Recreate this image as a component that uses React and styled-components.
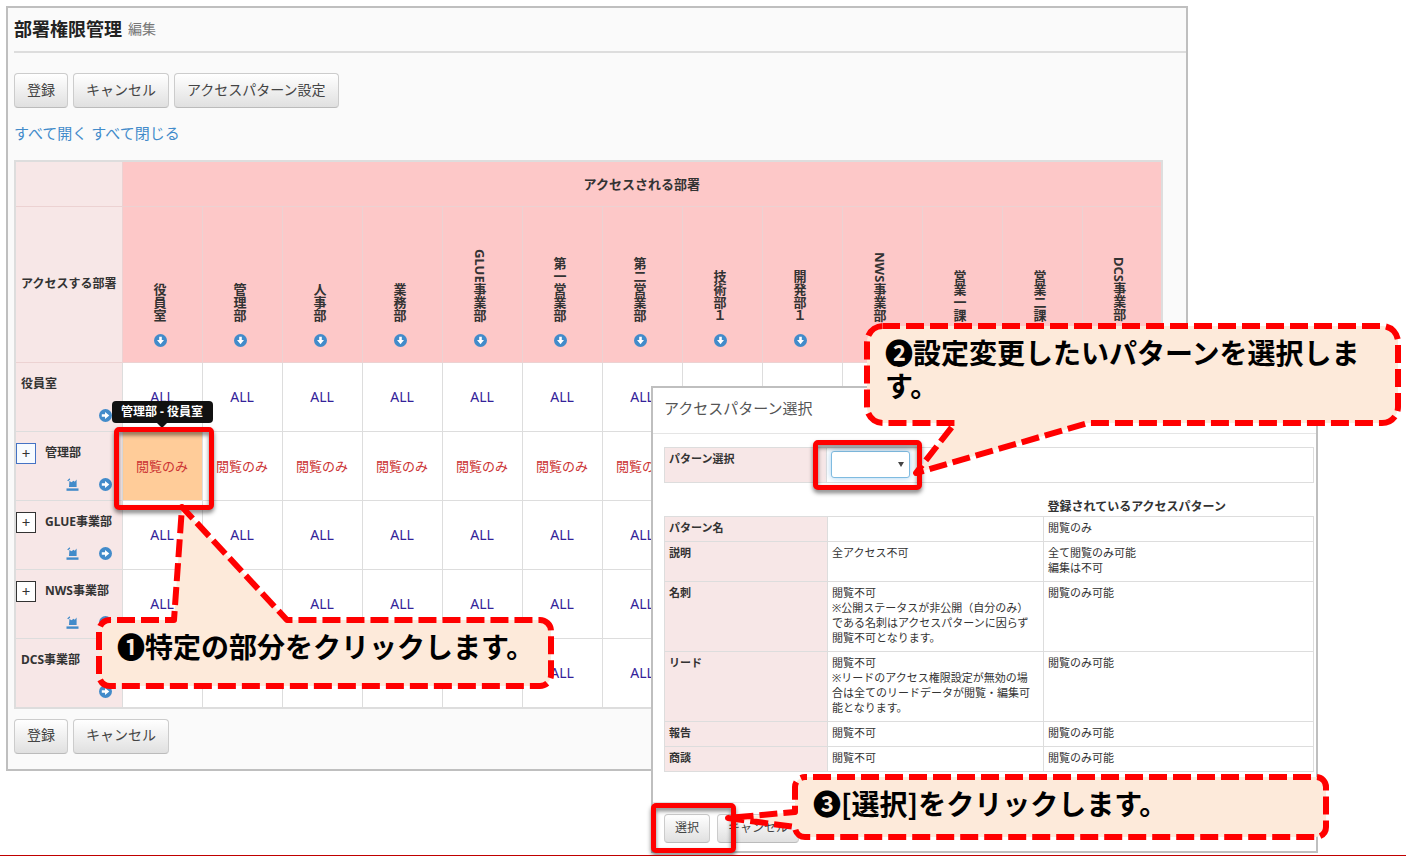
import React from 'react';
import styled, { createGlobalStyle } from 'styled-components';

const columns = [
  '役員室', '管理部', '人事部', '業務部', 'GLUE事業部', '第一営業部', '第二営業部',
  '技術部１', '開発部１', 'NWS事業部', '営業一課', '営業二課', 'DCS事業部',
];

const rows = [
  { name: '役員室', value: 'ALL' },
  { name: '管理部', value: '閲覧のみ', expandable: true, focused: true, readOnly: true },
  { name: 'GLUE事業部', value: 'ALL', expandable: true },
  { name: 'NWS事業部', value: 'ALL', expandable: true },
  { name: 'DCS事業部', value: 'ALL' },
];

const patterns = [
  { label: 'パターン名', current: [], registered: ['閲覧のみ'] },
  { label: '説明', current: ['全アクセス不可'], registered: ['全て閲覧のみ可能', '編集は不可'] },
  {
    label: '名刺',
    current: ['閲覧不可', '※公開ステータスが非公開（自分のみ）', 'である名刺はアクセスパターンに因らず', '閲覧不可となります。'],
    registered: ['閲覧のみ可能'],
  },
  {
    label: 'リード',
    current: ['閲覧不可', '※リードのアクセス権限設定が無効の場', '合は全てのリードデータが閲覧・編集可', '能となります。'],
    registered: ['閲覧のみ可能'],
  },
  { label: '報告', current: ['閲覧不可'], registered: ['閲覧のみ可能'] },
  { label: '商談', current: ['閲覧不可'], registered: ['閲覧のみ可能'] },
];

const CircleArrow = ({ down }) => (
  <svg width="13" height="13" viewBox="0 0 13 13" aria-hidden="true">
    <circle cx="6.5" cy="6.5" r="6.5" fill="#428bca" />
    <path
      d="M2.8 5.2H6V3L10.3 6.5L6 10V7.8H2.8Z"
      fill="#fff"
      transform={down ? 'rotate(90 6.5 6.5)' : undefined}
    />
  </svg>
);

const SaveArrow = () => (
  <svg width="13" height="13" viewBox="0 0 13 13" aria-hidden="true">
    <path d="M0.5 10.4H12.5V12.8H0.5Z" fill="#428bca" />
    <path d="M3 9L3.4 3L5.6 4.2L7.4 2.8L8.8 3.8L10.6 1.4V9ZM1.2 2.4L3.6 0.2L4.2 1.4L2.2 3.2Z" fill="#428bca" />
  </svg>
);

const Lines = ({ items }) =>
  items.map((item) => <Line key={item}>{item}</Line>);

const Callout = ({ left, top, width, height, path, offset, children }) => (
  <CalloutBox $left={left} $top={top} $width={width} $height={height}>
    <CalloutShape aria-hidden="true">
      <path
        d={path}
        fill="#fdeada"
        stroke="#f00"
        strokeWidth="6"
        strokeLinejoin="round"
        strokeDasharray="18 6"
        strokeDashoffset={offset}
      />
    </CalloutShape>
    <CalloutText>{children}</CalloutText>
  </CalloutBox>
);

const PermissionTable = () => (
  <Matrix>
    <colgroup>
      <LabelCol />
      {columns.map((name) => <col key={name} />)}
    </colgroup>
    <thead>
      <tr>
        <CornerCell />
        <GroupHead colSpan={columns.length}>アクセスされる部署</GroupHead>
      </tr>
      <tr>
        <SideHead>アクセスする部署</SideHead>
        {columns.map((name) => (
          <ColumnHead key={name} scope="col">
            <ColumnInner>
              <VerticalName>{name}</VerticalName>
              <CircleArrow down />
            </ColumnInner>
          </ColumnHead>
        ))}
      </tr>
    </thead>
    <tbody>
      {rows.map((row) => (
        <tr key={row.name}>
          <RowHead scope="row">
            <RowInner>
              <RowName>
                {row.expandable && (
                  <Expander type="button" $focused={row.focused} aria-label={`${row.name}を開く`}>+</Expander>
                )}
                <span>{row.name}</span>
              </RowName>
              <RowIcons>
                {row.expandable && <SaveArrow />}
                <CircleArrow />
              </RowIcons>
            </RowInner>
          </RowHead>
          {columns.map((name, i) => {
            const active = row.focused && i === 0;
            return (
              <ValueCell key={name} $readOnly={row.readOnly} $active={active}>
                {row.value}
                {active && (
                  <>
                    <Tooltip role="tooltip">管理部 - 役員室</Tooltip>
                    <CellHighlight />
                  </>
                )}
              </ValueCell>
            );
          })}
        </tr>
      ))}
    </tbody>
  </Matrix>
);

const PatternDialog = () => (
  <Dialog role="dialog" aria-labelledby="dialog-title">
    <DialogTitle id="dialog-title">アクセスパターン選択</DialogTitle>
    <DialogBody>
      <SelectRow>
        <SelectLabel htmlFor="pattern">パターン選択</SelectLabel>
        <SelectArea>
          <SelectWrap>
            <PatternSelect id="pattern" defaultValue="">
              <option value="" />
            </PatternSelect>
            <Caret aria-hidden="true" />
            <SelectHighlight />
          </SelectWrap>
        </SelectArea>
      </SelectRow>
      <PatternTable>
        <colgroup>
          <NameCol />
          <CurrentCol />
          <col />
        </colgroup>
        <thead>
          <tr>
            <PatternHead />
            <PatternHead />
            <PatternHead scope="col">登録されているアクセスパターン</PatternHead>
          </tr>
        </thead>
        <tbody>
          {patterns.map((item) => (
            <tr key={item.label}>
              <PatternLabel scope="row">{item.label}</PatternLabel>
              <PatternCell><Lines items={item.current} /></PatternCell>
              <PatternCell><Lines items={item.registered} /></PatternCell>
            </tr>
          ))}
        </tbody>
      </PatternTable>
    </DialogBody>
    <DialogFooter>
      <ChooseWrap>
        <SmallButton type="button">選択</SmallButton>
        <ChooseHighlight />
      </ChooseWrap>
      <SmallButton type="button">キャンセル</SmallButton>
    </DialogFooter>
  </Dialog>
);

const App = () => (
  <Page>
    <GlobalStyle />
    <Panel>
      <PageHeader>
        <PageTitle>部署権限管理</PageTitle>
        <PageMode>編集</PageMode>
      </PageHeader>
      <Toolbar>
        <Button type="button">登録</Button>
        <Button type="button">キャンセル</Button>
        <Button type="button">アクセスパターン設定</Button>
      </Toolbar>
      <LinkRow>
        <TextLink href="#open">すべて開く</TextLink>
        <TextLink href="#close">すべて閉じる</TextLink>
      </LinkRow>
      <PermissionTable />
      <BottomBar>
        <Button type="button">登録</Button>
        <Button type="button">キャンセル</Button>
      </BottomBar>
    </Panel>

    <PatternDialog />

    <Callout
      left={96} top={617} width={458} height={72} offset={17}
      path="M14 3H78L86 -110L191 3H444A11 11 0 0 1 455 14V58A11 11 0 0 1 444 69H14A11 11 0 0 1 3 58V14A11 11 0 0 1 14 3Z"
    >
      ❶特定の部分をクリックします。
    </Callout>
    <Callout
      left={864} top={323} width={537} height={103} offset={1}
      path="M19 3H518A16 16 0 0 1 534 19V84A16 16 0 0 1 518 100H224L52 150L91 100H19A16 16 0 0 1 3 84V19A16 16 0 0 1 19 3Z"
    >
      ❷設定変更したいパターンを選択します。
    </Callout>
    <Callout
      left={792} top={774} width={537} height={66} offset={16}
      path="M13 3H524A10 10 0 0 1 534 13V53A10 10 0 0 1 524 63H13A10 10 0 0 1 3 53L-64 44L3 38V13A10 10 0 0 1 13 3Z"
    >
      ❸[選択]をクリックします。
    </Callout>
  </Page>
);

export default App;


const GlobalStyle = createGlobalStyle`
  * {
    box-sizing: border-box;
  }

  body {
    margin: 0;
    background: #fff;
    color: #333;
    font-family: 'Noto Sans', 'Noto Sans CJK JP', sans-serif;
    font-size: 14px;
    line-height: 20px;
  }

  button, select {
    font-family: inherit;
  }
`;

const Page = styled.main`
  position: relative;
  min-height: 100vh;
  padding: 6px 218px 6px 6px;
  border-bottom: 1px solid #c00000;
  overflow: hidden;
`;

const Panel = styled.section`
  padding-left: 6px;
  padding-bottom: 15px;
  border: 2px solid #bfbfbf;
  background: #fafafa;
`;

const PageHeader = styled.header`
  display: flex;
  align-items: center;
  gap: 6px;
  height: 45px;
  padding-bottom: 2px;
  border-bottom: 2px solid #ddd;
`;

const PageTitle = styled.h1`
  margin: 0;
  font-size: 18px;
  font-weight: 700;
  color: #222;
`;

const PageMode = styled.small`
  font-size: 14px;
  color: #777;
`;

const Toolbar = styled.div`
  display: flex;
  gap: 5px;
  margin-top: 20px;
`;

const BottomBar = styled(Toolbar)`
  margin-top: 10px;
`;

const Button = styled.button`
  height: 35px;
  padding: 0 12px 4px;
  border: 1px solid #ccc;
  border-bottom-color: #bbb;
  border-radius: 4px;
  background: linear-gradient(#fff, #e0e0e0);
  color: #444;
  font-size: 14px;
`;

const SmallButton = styled(Button)`
  height: 29px;
  padding: 0 10px 2px;
  font-size: 12px;
`;

const LinkRow = styled.nav`
  display: flex;
  gap: 4px;
  margin: 15px 0 17px;
  font-size: 15px;
`;

const TextLink = styled.a`
  color: #428bca;
  text-decoration: none;
`;

const Matrix = styled.table`
  width: calc(100% - 23px);
  border: 2px solid #ddd;
  border-collapse: collapse;
  table-layout: fixed;

  th, td {
    padding: 0;
    border: 1px solid #ddd;
  }

  thead th, thead td {
    border-color: #ecd2d2;
  }
`;

const LabelCol = styled.col`
  width: 107px;
`;

const CornerCell = styled.td`
  height: 45px;
  background: #f7e7e7;
`;

const GroupHead = styled.th`
  background: #fdc8c8;
  font-size: 13px;
`;

const SideHead = styled.th`
  height: 156px;
  background: #f7e7e7;
  font-size: 12px;
  white-space: nowrap;
`;

const ColumnHead = styled.th`
  background: #fdc8c8;
  vertical-align: bottom;
`;

const ColumnInner = styled.div`
  display: flex;
  flex-direction: column;
  align-items: center;
  gap: 12px;
  padding: 0 4px 15px 0;
`;

const VerticalName = styled.span`
  margin-right: 1px;
  writing-mode: vertical-rl;
  font-size: 13px;
`;

const RowHead = styled.th`
  height: 69px;
  background: #f7e7e7;
  font-size: 12px;
`;

const RowInner = styled.div`
  display: flex;
  flex-direction: column;
  justify-content: space-between;
  height: 68px;
  padding: 11px 10px 9px 0;
`;

const RowName = styled.div`
  display: flex;
  align-items: center;
  gap: 9px;
  height: 21px;
  white-space: nowrap;

  span:only-child {
    margin-left: 5px;
  }
`;

const Expander = styled.button`
  flex: none;
  width: 20px;
  height: 21px;
  padding: 0;
  border: 1px solid ${({ $focused }) => ($focused ? '#4472c4' : '#333')};
  background: ${({ $focused }) => ($focused ? '#f7fbff' : '#fff')};
  color: #333;
  font-size: 15px;
  line-height: 18px;
`;

const RowIcons = styled.div`
  display: flex;
  justify-content: flex-end;
  gap: 20px;
`;

const ValueCell = styled.td`
  position: relative;
  background: ${({ $active }) => ($active ? '#ffcc99' : '#fff')};
  color: ${({ $readOnly }) => ($readOnly ? '#cc3333' : '#332299')};
  font-size: ${({ $readOnly }) => ($readOnly ? 13 : 14)}px;
  text-align: center;
  white-space: nowrap;
`;

const Tooltip = styled.span`
  position: absolute;
  top: -31px;
  left: -11px;
  width: 101px;
  height: 22px;
  border-radius: 4px;
  background: #111;
  color: #fff;
  font-size: 12px;
  font-weight: 700;
  line-height: 21px;

  &::after {
    content: '';
    position: absolute;
    top: 22px;
    left: 45px;
    border: 5px solid transparent;
    border-top-color: #111;
  }
`;

const Highlight = styled.span`
  position: absolute;
  z-index: 1;
  border: 5px solid #f00;
  border-radius: 5px;
  filter: drop-shadow(0 3px 2px rgba(0, 0, 0, 0.5));
  pointer-events: none;
`;

const CellHighlight = styled(Highlight)`
  inset: -5px -12px -10px -9px;
`;

const SelectHighlight = styled(Highlight)`
  inset: -11px -12px -12px -18px;
`;

const ChooseHighlight = styled(Highlight)`
  inset: -11px -26px -10px -13px;
`;

const Dialog = styled.section`
  position: absolute;
  top: 386px;
  left: 651px;
  width: 667px;
  border: 2px solid #bfbfbf;
  background: #fff;
  font-size: 11px;
  line-height: 15px;
`;

const DialogTitle = styled.h2`
  margin: 0;
  padding: 10px 11px 14px;
  border-bottom: 1px solid #e5e5e5;
  color: #555;
  font-size: 15px;
  font-weight: 400;
  line-height: 21px;
`;

const DialogBody = styled.div`
  padding: 13px 2px 30px 11px;
`;

const SelectRow = styled.div`
  display: flex;
  height: 36px;
  margin-bottom: 14px;
  border: 1px solid #ddd;
`;

const SelectLabel = styled.label`
  width: 162px;
  padding: 3px 4px;
  border-right: 1px solid #ddd;
  background: #f7e7e7;
  font-weight: 700;
`;

const SelectArea = styled.div`
  flex: 1;
  padding: 3px 4px;
`;

const SelectWrap = styled.div`
  position: relative;
  width: 79px;
  height: 27px;
`;

const PatternSelect = styled.select`
  width: 100%;
  height: 100%;
  border: 1px solid #7fbbe0;
  border-radius: 3px;
  background: #fff;
  box-shadow: 0 0 6px rgba(102, 175, 233, 0.6);
  appearance: none;
`;

const Caret = styled.span`
  position: absolute;
  top: 11px;
  right: 6px;
  border: 3px solid transparent;
  border-top: 5px solid #444;
  border-bottom: 0;
`;

const PatternTable = styled.table`
  width: 100%;
  border-collapse: collapse;
  table-layout: fixed;
`;

const NameCol = styled.col`
  width: 163px;
`;

const CurrentCol = styled.col`
  width: 216px;
`;

const PatternHead = styled.th`
  height: 19px;
  padding: 0 4px;
  font-size: 12px;
  text-align: left;
`;

const PatternCell = styled.td`
  padding: 3px 4px 6px;
  border: 1px solid #ddd;
  vertical-align: top;
`;

const PatternLabel = styled.th`
  padding: 3px 4px 6px;
  border: 1px solid #ddd;
  background: #f7e7e7;
  text-align: left;
  vertical-align: top;
`;

const Line = styled.div`
  white-space: nowrap;
`;

const DialogFooter = styled.footer`
  display: flex;
  gap: 7px;
  padding: 11px 11px 8px;
  border-top: 1px solid #e5e5e5;
`;

const ChooseWrap = styled.div`
  position: relative;
`;

const CalloutBox = styled.aside`
  position: absolute;
  z-index: 2;
  top: ${({ $top }) => $top}px;
  left: ${({ $left }) => $left}px;
  width: ${({ $width }) => $width}px;
  height: ${({ $height }) => $height}px;
  padding: 13px 18px 13px 21px;
`;

const CalloutShape = styled.svg`
  position: absolute;
  top: 0;
  left: 0;
  width: 100%;
  height: 100%;
  overflow: visible;
`;

const CalloutText = styled.p`
  position: relative;
  margin: 0;
  color: #000;
  font-family: 'Noto Sans CJK JP', sans-serif;
  font-size: 28px;
  font-weight: 700;
  line-height: 33px;
`;
